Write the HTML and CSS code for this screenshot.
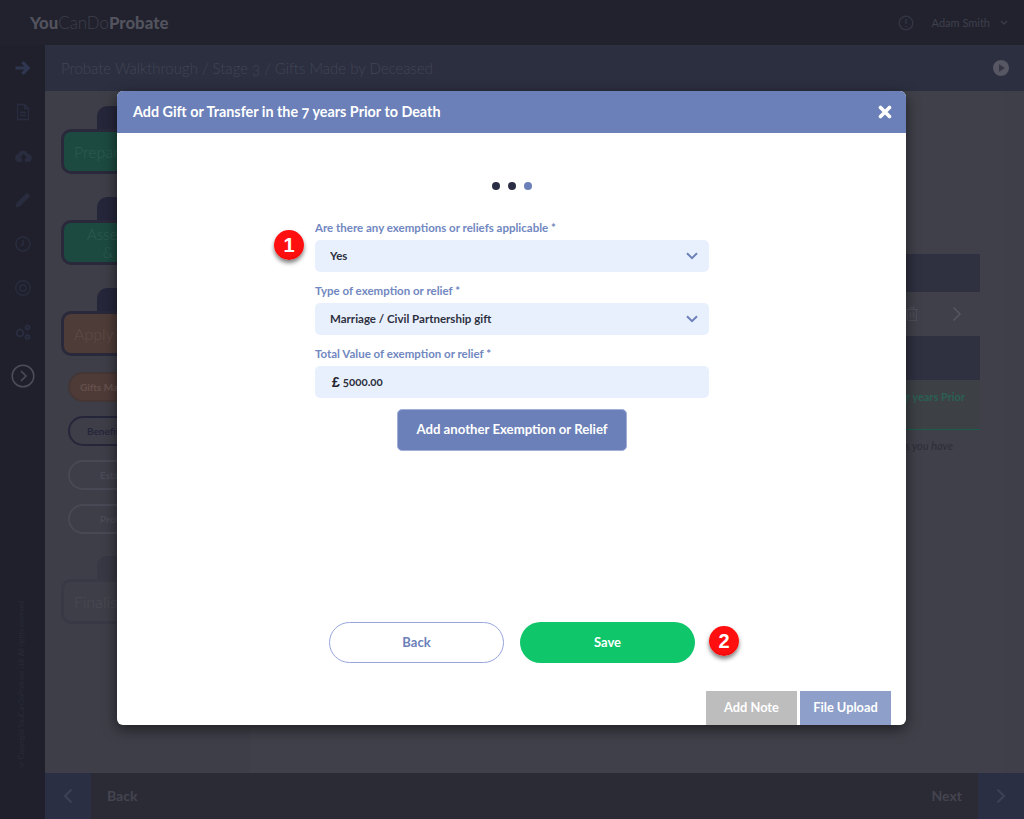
FILE: index.html
```html
<!DOCTYPE html>
<html lang="en">
<head>
  <meta charset="UTF-8" />
  <meta name="viewport" content="width=device-width, initial-scale=1" />
  <title>You Can Do Probate</title>
  <link rel="stylesheet" href="styles.css">
</head>
<body>
  <header class="topbar">
    <div class="logo"><b>You</b>CanDo<b>Probate</b></div>
    <div class="user">
      <svg class="info-icon" width="16" height="16" viewBox="0 0 16 16" fill="none" stroke="#333545" stroke-width="1.4"><circle cx="8" cy="8" r="6.8"/><path d="M8 4v5M8 11v1.2"/></svg>
      <span class="user-name">Adam Smith</span>
      <svg width="8" height="6" viewBox="0 0 8 6" fill="none" stroke="#3c3d4b" stroke-width="1.3"><path d="M1 1l3 3 3-3"/></svg>
    </div>
  </header>

  <div class="layout">
    <!-- Menu kiri -->
    <aside class="sidebar">
      <svg class="side-icon" width="18" height="18" viewBox="0 0 18 18" fill="#2f3750"><path d="M9.5 2l7 7-7 7-2.2-2.2 3.2-3.2H1.500V7.400h9L7.300 4.200z"/></svg>
      <svg class="side-icon" width="18" height="18" viewBox="0 0 18 18" fill="none" stroke="#292c3e" stroke-width="1.3"><path d="M3.500 1.500h7l4 4v11h-11zM10.500 1.500v4h4M6 9.500h6M6 12.500h6"/></svg>
      <svg class="side-icon" width="18" height="18" viewBox="0 0 18 18" fill="#292c3e"><path d="M5 15a4 4 0 0 1-.8-7.900A5 5 0 0 1 13.700 7 4 4 0 0 1 14 15h-3v-4h2L9.500 7 6 11h2v4z"/></svg>
      <svg class="side-icon" width="18" height="18" viewBox="0 0 18 18" fill="#292c3e"><path d="M1.500 16.500l1-4.500L12 2.500a1.500 1.500 0 0 1 2 0L15.500 4a1.500 1.500 0 0 1 0 2L6 15.500z"/></svg>
      <svg class="side-icon" width="18" height="18" viewBox="0 0 18 18" fill="none" stroke="#292c3e" stroke-width="1.500"><circle cx="9" cy="9" r="7"/><path d="M9 5v4.500L6.500 11"/></svg>
      <svg class="side-icon" width="18" height="18" viewBox="0 0 18 18" fill="none" stroke="#292c3e" stroke-width="1.400"><circle cx="9" cy="9" r="7.300"/><circle cx="9" cy="9" r="3.200"/></svg>
      <svg class="side-icon" width="18" height="18" viewBox="0 0 18 18" fill="none" stroke="#292c3e" stroke-width="2.200"><circle cx="6" cy="10" r="3.300"/><circle cx="13.500" cy="4.500" r="1.900"/><circle cx="13.500" cy="14" r="1.900"/></svg>
      <svg class="side-toggle" width="24" height="24" viewBox="0 0 24 24" fill="none" stroke="#4c4d58" stroke-width="1.500"><circle cx="12" cy="12" r="10.800"/><path d="M10 7l5 5-5 5"/></svg>
      <div class="copyright">© Copyright YouCanDoProbate Ltd. All rights reserved</div>
    </aside>

    <div class="content">
      <div class="crumbs">
        <span>Probate Walkthrough / Stage 3 / Gifts Made by Deceased</span>
        <svg width="16" height="16" viewBox="0 0 16 16"><circle cx="8" cy="8" r="8" fill="#565763"/><path d="M6 4.200L12 8l-6 3.800z" fill="#343645"/></svg>
      </div>

      <div class="main">
        <!-- Tahapan -->
        <div class="stages">
          <div class="stage">
            <div class="stage-tab"></div>
            <div class="stage-card stage-green">Prepare</div>
          </div>
          <div class="stage">
            <div class="stage-tab"></div>
            <div class="stage-card stage-green stage-two">Assets<br>&amp;</div>
          </div>
          <div class="stage">
            <div class="stage-tab"></div>
            <div class="stage-card stage-brown">Apply</div>
          </div>
          <div class="pills">
            <div class="pill pill-active">Gifts Made</div>
            <div class="pill pill-dark">Benefits</div>
            <div class="pill pill-dim">Estate</div>
            <div class="pill pill-dim">Probate</div>
          </div>
          <div class="stage stage-last">
            <div class="stage-tab stage-tab-dim"></div>
            <div class="stage-card stage-dim">Finalise</div>
          </div>
        </div>

        <!-- Panel kanan -->
        <div class="panel">
          <div class="panel-bar"></div>
          <div class="panel-tools">
            <svg width="14" height="16" viewBox="0 0 14 16" fill="none" stroke="#4c4d58" stroke-width="1.200"><path d="M1 3.500h12M5 3.500V1.500h4v2M2.500 3.500v11h9v-11M5.500 6v6M8.500 6v6"/></svg>
            <svg width="10" height="16" viewBox="0 0 10 16" fill="none" stroke="#55565f" stroke-width="1.500"><path d="M1.500 1.500L8 8l-6.500 6.500"/></svg>
          </div>
          <div class="panel-bar panel-bar-tall"></div>
          <div class="panel-tab">Gifts or Transfers in the 7 years Prior</div>
          <p class="panel-note">Please list all of the gifts you have</p>
        </div>
      </div>

      <footer class="bottombar">
        <div class="nav-left">
          <span class="nav-arrow"><svg width="10" height="16" viewBox="0 0 10 16" fill="none" stroke="#3d4258" stroke-width="2"><path d="M8.500 1.500L2 8l6.500 6.500"/></svg></span>
          <span class="nav-label">Back</span>
        </div>
        <div class="nav-right">
          <span class="nav-label">Next</span>
          <span class="nav-arrow"><svg width="10" height="16" viewBox="0 0 10 16" fill="none" stroke="#3d4258" stroke-width="2"><path d="M1.500 1.500L8 8l-6.500 6.500"/></svg></span>
        </div>
      </footer>
    </div>
  </div>

  <!-- Dialog -->
  <section class="modal">
    <div class="modal-header">
      <h2>Add Gift or Transfer in the 7 years Prior to Death</h2>
      <svg width="14" height="14" viewBox="0 0 14 14" stroke="#fff" stroke-width="3.600" stroke-linecap="round"><path d="M2.500 2.500l9 9M11.500 2.500l-9 9"/></svg>
    </div>

    <div class="modal-body">
      <div class="dots">
        <span class="dot"></span>
        <span class="dot"></span>
        <span class="dot dot-current"></span>
      </div>

      <form class="gift-form">
        <label class="field">Are there any exemptions or reliefs applicable *
          <span class="control">
            <select>
              <option>Yes</option>
              <option>No</option>
            </select>
            <svg class="chevron" width="12" height="8" viewBox="0 0 12 8" fill="none" stroke="#6b80b8" stroke-width="2"><path d="M1 1.200l5 5 5-5"/></svg>
          </span>
          <span class="badge badge-one">1</span>
        </label>
        <label class="field">Type of exemption or relief *
          <span class="control">
            <select>
              <option>Marriage / Civil Partnership gift</option>
            </select>
            <svg class="chevron" width="12" height="8" viewBox="0 0 12 8" fill="none" stroke="#6b80b8" stroke-width="2"><path d="M1 1.200l5 5 5-5"/></svg>
          </span>
        </label>
        <label class="field">Total Value of exemption or relief *
          <span class="control control-money">
            <span class="currency">£</span>
            <input type="text" value="5000.00" />
          </span>
        </label>
        <button type="button" class="btn-add">Add another Exemption or Relief</button>
      </form>

      <div class="actions">
        <button type="button" class="btn-back">Back</button>
        <button type="button" class="btn-save">Save</button>
        <span class="badge badge-two">2</span>
      </div>

      <div class="tabs">
        <button type="button" class="tab tab-note">Add Note</button>
        <button type="button" class="tab tab-upload">File Upload</button>
      </div>
    </div>
  </section>
</body>
</html>
```

FILE: styles.css
```css
/* Dasar */
*, *::before, *::after {
  margin: 0;
  padding: 0;
  box-sizing: border-box;
}
body {
  font-family: 'Lato', 'Noto Sans', sans-serif;
  font-variant-numeric: oldstyle-nums;
  background: #3f3f49;
  height: 819px;
  overflow: hidden;
  display: flex;
  flex-direction: column;
}

/* Header */
.topbar {
  height: 45px;
  background: #21222e;
  display: flex;
  align-items: center;
  justify-content: space-between;
  padding: 0 15px 0 30px;
}
.logo {
  color: #3e3f4b;
  font-size: 16.800px;
  font-weight: 300;
}
.logo b {
  color: #53535e;
  font-weight: 900;
}
.user {
  display: flex;
  align-items: center;
  margin-right: 1px;
}
.user-name {
  color: #3f404c;
  font-size: 11px;
  margin: 0 10px 0 19px;
}
.info-icon {
  margin-right: -1px;
}

.layout {
  flex: 1;
  display: flex;
  min-height: 0;
}

/* Menu kiri */
.sidebar {
  width: 45px;
  background: #1f202c;
  display: flex;
  flex-direction: column;
  align-items: center;
  padding-top: 14px;
  gap: 26px;
  position: relative;
}
.side-toggle {
  margin-top: -3px;
}
.copyright {
  position: absolute;
  bottom: 50px;
  left: 17px;
  height: 180px;
  overflow: hidden;
  writing-mode: vertical-rl;
  transform: rotate(180deg);
  color: #292b39;
  font-size: 7px;
  white-space: nowrap;
}

.content {
  flex: 1;
  display: flex;
  flex-direction: column;
  min-width: 0;
}
.crumbs {
  height: 46px;
  background: #2c2f40;
  color: #414555;
  font-size: 15px;
  font-weight: 300;
  display: flex;
  align-items: center;
  justify-content: space-between;
  padding: 0 15px 0 16px;
}

.main {
  flex: 1;
  display: flex;
  min-height: 0;
}

/* Tahapan */
.stages {
  width: 205px;
  padding: 15px 15px 0 16px;
  background: #3e3e48;
  display: flex;
  flex-direction: column;
}
.stage {
  margin-bottom: 23px;
}
.stage-tab {
  width: 70px;
  height: 23px;
  margin-left: 36px;
  background: #25263a;
  border-radius: 10px 0 0 0;
}
.stage-tab-dim {
  background: #373843;
}
.stage-card {
  height: 45px;
  border: 3px solid #29293b;
  border-radius: 10px;
  font-size: 16px;
  font-weight: 300;
  display: flex;
  align-items: center;
  padding: 0 10px;
}
.stage-green {
  background: #1c4a40;
  color: #2d5c50;
}
.stage-two {
  justify-content: center;
  text-align: center;
  font-size: 15px;
  line-height: 18px;
  padding: 0 80px 0 0;
}
.stage-brown {
  background: #4e3c38;
  color: #5f4c48;
}
.stage-dim {
  border-color: #383944;
  color: #494a55;
  background: transparent;
}
.pills {
  margin: -7px 0 0 7px;
  display: flex;
  flex-direction: column;
  gap: 14px;
}
.pill {
  height: 30px;
  border-radius: 15px;
  font-size: 10px;
  font-weight: 700;
  display: flex;
  align-items: center;
  padding-left: 10px;
}
.pill-active {
  background: #4e3b38;
  border: 2px solid #453636;
  color: #65504c;
}
.pill-dark {
  border: 2px solid #25263a;
  color: #25263a;
  padding-left: 17px;
}
.pill-dim {
  border: 2px solid #484954;
  color: #4a4b56;
  padding-left: 30px;
}
.stage-last {
  margin-top: 22px;
}

/* Panel kanan */
.panel {
  flex: 1;
  margin-right: 21px;
  background: #40404a;
  padding: 163px 23px 0 20px;
}
.panel-bar {
  height: 38px;
  background: #2f3040;
}
.panel-bar-tall {
  height: 44px;
}
.panel-tools {
  height: 44px;
  display: flex;
  align-items: center;
  justify-content: flex-end;
  gap: 33px;
  padding-right: 18px;
}
.panel-tab {
  height: 50px;
  background: #3d4146;
  border-bottom: 1px solid #1c5d4a;
  color: #2b5f55;
  font-size: 11px;
  font-weight: 700;
  text-align: right;
  padding: 10px 15px 0 0;
}
.panel-note {
  color: #2c2d38;
  font-size: 11px;
  font-style: italic;
  text-align: right;
  padding: 9px 27px 0 0;
}

/* Footer */
.bottombar {
  height: 46px;
  background: #2b2b36;
  display: flex;
  justify-content: space-between;
}
.nav-left, .nav-right {
  display: flex;
  align-items: center;
}
.nav-arrow {
  width: 46px;
  height: 46px;
  background: #2a2f43;
  display: flex;
  align-items: center;
  justify-content: center;
}
.nav-label {
  color: #44444f;
  font-size: 14px;
  font-weight: 700;
  margin: -2px 16px 0;
}

/* Dialog */
.modal {
  position: absolute;
  left: 117px;
  top: 91px;
  width: 789px;
  height: 634px;
  background: #fff;
  border-radius: 6px;
  box-shadow: 0 4px 14px rgba(0, 0, 0, 0.55);
  overflow: hidden;
  display: flex;
  flex-direction: column;
}
.modal-header {
  height: 42px;
  flex: none;
  background: #6b80b8;
  color: #fff;
  display: flex;
  align-items: center;
  justify-content: space-between;
  padding: 0 14px 0 16px;
}
.modal-header h2 {
  font-size: 14.350px;
  font-weight: 700;
  margin-top: -1px;
}
.modal-body {
  flex: 1;
  display: flex;
  flex-direction: column;
  align-items: center;
  padding: 49px 0 0 1px;
}
.dots {
  display: flex;
  gap: 8px;
  margin-bottom: 31px;
}
.dot {
  width: 8px;
  height: 8px;
  border-radius: 50%;
  background: #2b2d45;
}
.dot-current {
  background: #6b80b8;
}

/* Formulir */
.gift-form {
  width: 394px;
  display: flex;
  flex-direction: column;
  align-items: center;
}
.field {
  width: 100%;
  display: flex;
  flex-direction: column;
  gap: 5px;
  color: #7187c1;
  font-size: 11.500px;
  font-weight: 700;
  line-height: 14px;
  margin-bottom: 12px;
  position: relative;
}
.control {
  height: 32px;
  background: #e9f0fd;
  border-radius: 5px;
  display: flex;
  align-items: center;
  position: relative;
}
select, input {
  width: 100%;
  height: 100%;
  border: none;
  outline: none;
  background: transparent;
  appearance: none;
  font-family: inherit;
  font-variant-numeric: oldstyle-nums;
  font-size: 11.500px;
  font-weight: 700;
  color: #2e3040;
  padding: 0 15px 1px;
}
.chevron {
  position: absolute;
  right: 11px;
  top: 12px;
  pointer-events: none;
}
.control-money input {
  padding-left: 3px;
}
.currency {
  color: #23242f;
  font-family: 'Liberation Sans', sans-serif;
  font-size: 14px;
  font-weight: 700;
  padding-left: 17px;
}
.btn-add {
  width: 230px;
  height: 42px;
  margin-top: -1px;
  background: #6b80b8;
  border: 1px solid #9fb0d8;
  border-radius: 5px;
  color: #fff;
  font-family: inherit;
  font-size: 13.200px;
  font-weight: 700;
  padding-bottom: 2px;
}

/* Tombol bawah */
.actions {
  margin-top: 171px;
  display: flex;
  gap: 16px;
  position: relative;
}
.actions button {
  width: 175px;
  height: 41px;
  border-radius: 21px;
  font-family: inherit;
  font-size: 13px;
  font-weight: 700;
  padding-bottom: 2px;
}
.btn-back {
  background: #fff;
  border: 1px solid #96a6dc;
  color: #6b80b8;
}
.btn-save {
  background: #10c66a;
  border: none;
  color: #fff;
}
.tabs {
  margin-top: 28px;
  align-self: flex-end;
  margin-right: 15px;
  display: flex;
  gap: 3px;
}
.tab {
  width: 91px;
  height: 34px;
  border: none;
  color: #fff;
  font-family: inherit;
  font-size: 12.800px;
  font-weight: 700;
  padding-bottom: 3px;
}
.tab-note {
  background: #bdbdbd;
}
.tab-upload {
  background: #8e9fca;
}

/* Penanda nomor */
.badge {
  position: absolute;
  width: 30px;
  height: 30px;
  border-radius: 50%;
  background: radial-gradient(circle at 50% 40%, #ff0f0f 60%, #d60000);
  box-shadow: 0 3px 4px rgba(0, 0, 0, 0.5);
  color: #fff;
  font-family: 'Liberation Sans', sans-serif;
  font-size: 20px;
  font-weight: 700;
  line-height: 30px;
  text-align: center;
}
.badge-one {
  left: -41px;
  top: 9px;
}
.badge-two {
  right: -44px;
  top: 4px;
}
```
